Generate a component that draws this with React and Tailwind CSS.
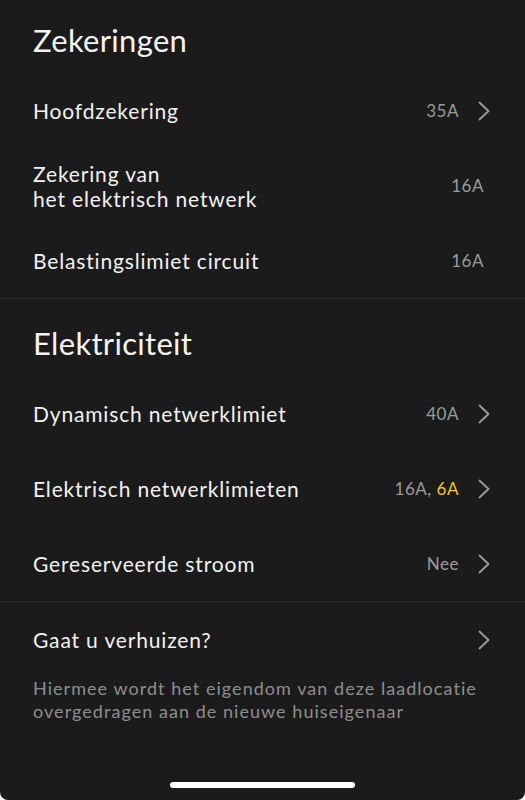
import React from 'react';

const Chevron = () => (
  <svg width="14" height="20" viewBox="0 0 14 20" fill="none" className="ml-[18px] shrink-0">
    <path d="M2.5 1.5L11.5 10L2.5 18.5" stroke="#9d9d9d" strokeWidth="1.8" strokeLinecap="round" strokeLinejoin="round" />
  </svg>
);

const Row = ({ label, value, chevron = true }) => (
  <div className="flex h-[75px] items-center justify-between pl-[33px] pr-[34px]">
    <div className="text-[21px] leading-[25px] tracking-[0.04em] text-[#f2f2f2]">{label}</div>
    <div className={`flex items-center ${chevron ? '' : 'mr-[7px]'}`}>
      <span className="text-[17px] tracking-[0.03em] text-[#9b9b9b]">{value}</span>
      {chevron && <Chevron />}
    </div>
  </div>
);

const App = () => {
  return (
    <div className="bg-white">
      <div
        className="flex h-[800px] flex-col overflow-hidden rounded-b-[8px] bg-[#1b1b1b]"
        style={{ fontFamily: 'Lato, "Noto Sans", sans-serif' }}
      >
        <section>
          <h1 className="pl-[33px] pt-[20px] pb-[13px] text-[31px] leading-[40px] font-normal tracking-[0.01em] text-[#f4f4f4]">
            Zekeringen
          </h1>
          <Row label="Hoofdzekering" value="35A" />
          <Row
            label={<>Zekering van<br />het elektrisch netwerk</>}
            value="16A"
            chevron={false}
          />
          <Row label="Belastingslimiet circuit" value="16A" chevron={false} />
        </section>

        <div className="h-px bg-[#2b2b2b]" />

        <section>
          <h1 className="pl-[33px] pt-[24px] pb-[13px] text-[31px] leading-[40px] font-normal tracking-[0.01em] text-[#f4f4f4]">
            Elektriciteit
          </h1>
          <Row label="Dynamisch netwerklimiet" value="40A" />
          <Row
            label="Elektrisch netwerklimieten"
            value={<>16A, <span className="text-[#f3c623]">6A</span></>}
          />
          <Row label="Gereserveerde stroom" value="Nee" />
        </section>

        <div className="h-px bg-[#2b2b2b]" />

        <section>
          <Row label="Gaat u verhuizen?" value="" />
          <p className="px-[33px] text-[18px] leading-[23px] tracking-[0.058em] text-[#8e8e8e]">
            Hiermee wordt het eigendom van deze laadlocatie
            <br />
            overgedragen aan de nieuwe huiseigenaar
          </p>
        </section>

        <div className="mt-auto flex justify-center pb-[12px]">
          <div className="h-[6px] w-[185px] rounded-full bg-white" />
        </div>
      </div>
    </div>
  );
};

export default App;
